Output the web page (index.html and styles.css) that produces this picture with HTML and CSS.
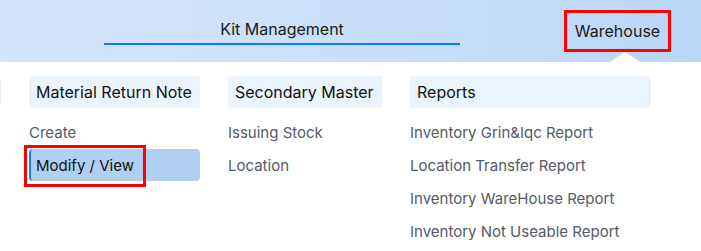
FILE: index.html
```html
<!DOCTYPE html>
<html lang="en">
<head>
    <meta charset="UTF-8">
    <title>Warehouse Menu</title>
    <link rel="stylesheet" href="styles.css">
</head>
<body>
    <nav class="topbar">
        <a class="nav-link nav-kit">Kit Management</a>
        <a class="nav-link nav-warehouse">Warehouse<span class="caret"></span></a>
    </nav>

    <div class="mega-menu">
        <div class="menu-col col-ghost">
            <div class="col-head">&nbsp;</div>
        </div>

        <div class="menu-col col-mrn">
            <div class="col-head">Material Return Note</div>
            <ul>
                <li>Create</li>
                <li class="active">Modify / View<span class="mark"></span></li>
            </ul>
        </div>

        <div class="menu-col col-secondary">
            <div class="col-head">Secondary Master</div>
            <ul>
                <li>Issuing Stock</li>
                <li>Location</li>
            </ul>
        </div>

        <div class="menu-col col-reports">
            <div class="col-head">Reports</div>
            <ul>
                <li>Inventory Grin&amp;Iqc Report</li>
                <li>Location Transfer Report</li>
                <li>Inventory WareHouse Report</li>
                <li>Inventory Not Useable Report</li>
            </ul>
        </div>
    </div>
</body>
</html>
```

FILE: styles.css
```css
* {
    box-sizing: border-box;
    margin: 0;
    padding: 0;
}

body {
    font-family: 'Inter', 'Noto Sans', sans-serif;
    background: #ffffff;
    color: #111111;
    overflow: hidden;
}

/* top navigation */
.topbar {
    height: 62px;
    display: flex;
    align-items: flex-start;
    padding-left: 104px;
    background: linear-gradient(90deg, #d3e5fb 0%, #c9e0fa 50%, #bad7f7 100%);
}

.nav-link {
    font-size: 16px;
    color: #1a1a1a;
    text-decoration: none;
    text-align: center;
    position: relative;
}

.nav-kit {
    width: 356px;
    height: 45px;
    padding-top: 19px;
    border-bottom: 2px solid #0b7cf4;
}

.nav-warehouse {
    margin-left: 104px;
    margin-top: 10px;
    width: 107px;
    height: 42px;
    line-height: 37px;
    border: 3px solid #ff0000;
}

.caret {
    position: absolute;
    left: 43px;
    top: 39px;
    width: 0;
    height: 0;
    border-left: 15px solid transparent;
    border-right: 15px solid transparent;
    border-bottom: 10px solid #ffffff;
}

/* dropdown panel */
.mega-menu {
    display: flex;
    gap: 28px;
    padding-top: 14px;
    margin-left: -149px;
}

.menu-col ul {
    list-style: none;
    margin-top: 8px;
}

.col-ghost { width: 150px; }
.col-mrn { width: 171px; }
.col-secondary { width: 154px; }
.col-reports { width: 241px; }

.col-head {
    height: 32px;
    line-height: 32px;
    padding-left: 7px;
    font-size: 16px;
    color: #111111;
    background: #ebf3fd;
    border-radius: 4px;
    white-space: nowrap;
}

.menu-col li {
    height: 32px;
    line-height: 33px;
    margin-bottom: 1px;
    font-size: 15px;
    color: #545a66;
    white-space: nowrap;
    position: relative;
}

.menu-col li.active {
    padding-left: 5px;
    color: #111111;
    background: #afd0f1;
    border-left: 2px solid #1a7ff0;
    border-radius: 4px;
}

.mark {
    position: absolute;
    left: -7px;
    top: -4px;
    width: 122px;
    height: 42px;
    border: 3px solid #ff0000;
}
```
